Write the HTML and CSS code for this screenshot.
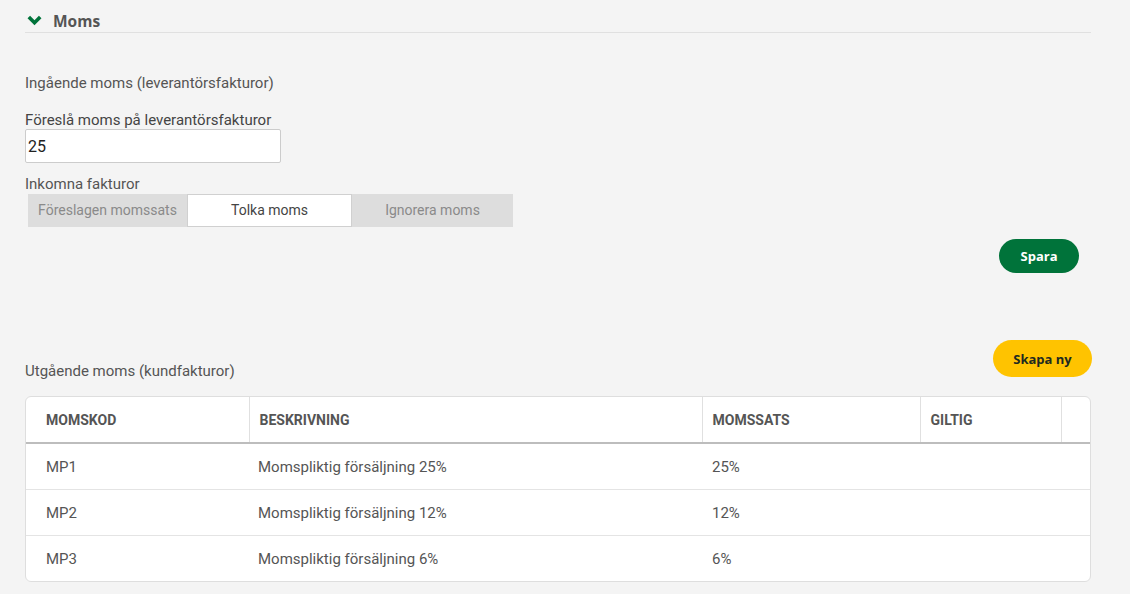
FILE: index.html
```html
<!DOCTYPE html>
<html lang="sv">
<head>
    <meta charset="UTF-8">
    <title>Moms</title>
    <link rel="stylesheet" href="styles.css">
</head>
<body>
    <div class="page">
        <div class="section-head">
            <svg class="chevron" width="15" height="11" viewBox="0 0 15 11"><path d="M1.8 2 L7.5 7.7 L13.2 2" fill="none" stroke="#00733a" stroke-width="3.6"/></svg>
            <span class="section-title">Moms</span>
        </div>

        <div class="sub-title">Ingående moms (leverantörsfakturor)</div>

        <label class="field-label">Föreslå moms på leverantörsfakturor</label>
        <input class="text-input" type="text" value="25">

        <div class="field-label">Inkomna fakturor</div>
        <div class="segmented">
            <div class="seg">Föreslagen momssats</div>
            <div class="seg active">Tolka moms</div>
            <div class="seg">Ignorera moms</div>
        </div>

        <div class="save-row">
            <button class="btn btn-green">Spara</button>
        </div>

        <div class="out-row">
            <div class="sub-title">Utgående moms (kundfakturor)</div>
            <button class="btn btn-yellow">Skapa ny</button>
        </div>

        <div class="table-wrap">
            <table class="vat-table">
                <colgroup>
                    <col style="width: 223px">
                    <col style="width: 453px">
                    <col style="width: 218px">
                    <col style="width: 141px">
                    <col>
                </colgroup>
                <thead>
                    <tr>
                        <th>Momskod</th>
                        <th>Beskrivning</th>
                        <th>Momssats</th>
                        <th>Giltig</th>
                        <th></th>
                    </tr>
                </thead>
                <tbody>
                    <tr>
                        <td>MP1</td>
                        <td>Momspliktig försäljning 25%</td>
                        <td>25%</td>
                        <td></td>
                        <td></td>
                    </tr>
                    <tr>
                        <td>MP2</td>
                        <td>Momspliktig försäljning 12%</td>
                        <td>12%</td>
                        <td></td>
                        <td></td>
                    </tr>
                    <tr>
                        <td>MP3</td>
                        <td>Momspliktig försäljning 6%</td>
                        <td>6%</td>
                        <td></td>
                        <td></td>
                    </tr>
                </tbody>
            </table>
        </div>
    </div>
</body>
</html>
```

FILE: styles.css
```css
body {
    margin: 0;
    background-color: #f4f4f4;
    font-family: Roboto, "Liberation Sans", sans-serif;
    color: #555;
}
.page {
    width: 1066px;
    padding: 10px 0 0 25px;
}
.section-head {
    display: flex;
    align-items: center;
    height: 22px;
    border-bottom: 1px solid #e0e0e0;
}
.chevron {
    margin-left: 2px;
    margin-right: 11px;
    margin-top: -2px;
}
.section-title {
    font-family: "Open Sans", "DejaVu Sans", sans-serif;
    font-weight: 700;
    font-size: 15.5px;
    color: #555;
}
.sub-title {
    font-size: 15px;
    color: #555;
}
.page > .sub-title {
    margin-top: 41px;
}
.field-label {
    display: block;
    margin-top: 19px;
    font-size: 15px;
    color: #444;
    line-height: 18px;
}
.field-label + .segmented {
    margin-top: 1px;
}
.text-input + .field-label {
    margin-top: 12px;
    color: #555;
}
.text-input {
    display: block;
    box-sizing: border-box;
    width: 256px;
    height: 34px;
    margin-top: 0;
    padding: 0 6px 0 2px;
    border: 1px solid #ccc;
    border-radius: 2px;
    background: #fff;
    font-family: Roboto, "Liberation Sans", sans-serif;
    font-size: 16px;
    color: #222;
}
.segmented {
    display: flex;
    width: 485px;
    margin-left: 3px;
    background-color: #dddddd;
}
.seg {
    height: 33px;
    line-height: 33px;
    text-align: center;
    font-size: 14px;
    color: #8a8a8a;
    box-sizing: border-box;
}
.seg:nth-child(1) { width: 159px; }
.seg:nth-child(2) { width: 165px; }
.seg:nth-child(3) { width: 161px; }
.seg.active {
    background-color: #fff;
    color: #444;
    border: 1px solid #d0d0d0;
    line-height: 31px;
}
.save-row {
    display: flex;
    justify-content: flex-end;
    padding-right: 12px;
    margin-top: 12px;
}
.btn {
    border: none;
    cursor: pointer;
    font-family: "Open Sans", "DejaVu Sans", sans-serif;
    font-weight: 700;
    font-size: 13px;
}
.btn-green {
    width: 80px;
    height: 34px;
    border-radius: 17px;
    background-color: #00733a;
    color: #fff;
}
.out-row {
    display: flex;
    justify-content: space-between;
    align-items: flex-end;
    margin-top: 67px;
    margin-right: -1px;
}
.out-row .sub-title {
    margin-bottom: -3px;
}
.btn-yellow {
    width: 99px;
    height: 37px;
    border-radius: 19px;
    background-color: #ffc300;
    color: #1d2a20;
}
.table-wrap {
    margin-top: 19px;
    background: #fff;
    border: 1px solid #dedede;
    border-radius: 6px;
    overflow: hidden;
}
.vat-table {
    width: 100%;
    border-collapse: collapse;
    table-layout: fixed;
}
.vat-table th {
    height: 45px;
    padding: 0 10px;
    text-align: left;
    text-transform: uppercase;
    font-size: 14px;
    font-weight: 700;
    color: #555;
    border-right: 1px solid #e0e0e0;
    border-bottom: 2px solid #bdbdbd;
}
.vat-table th:last-child {
    border-right: none;
}
.vat-table td {
    height: 45px;
    padding: 0 10px;
    font-size: 15px;
    color: #555;
    border-top: 1px solid #e4e4e4;
}
.vat-table tbody tr:first-child td {
    border-top: none;
}
.vat-table th:first-child,
.vat-table td:first-child {
    padding-left: 20px;
}
.vat-table td:nth-child(2) {
    padding-left: 9px;
}
```
